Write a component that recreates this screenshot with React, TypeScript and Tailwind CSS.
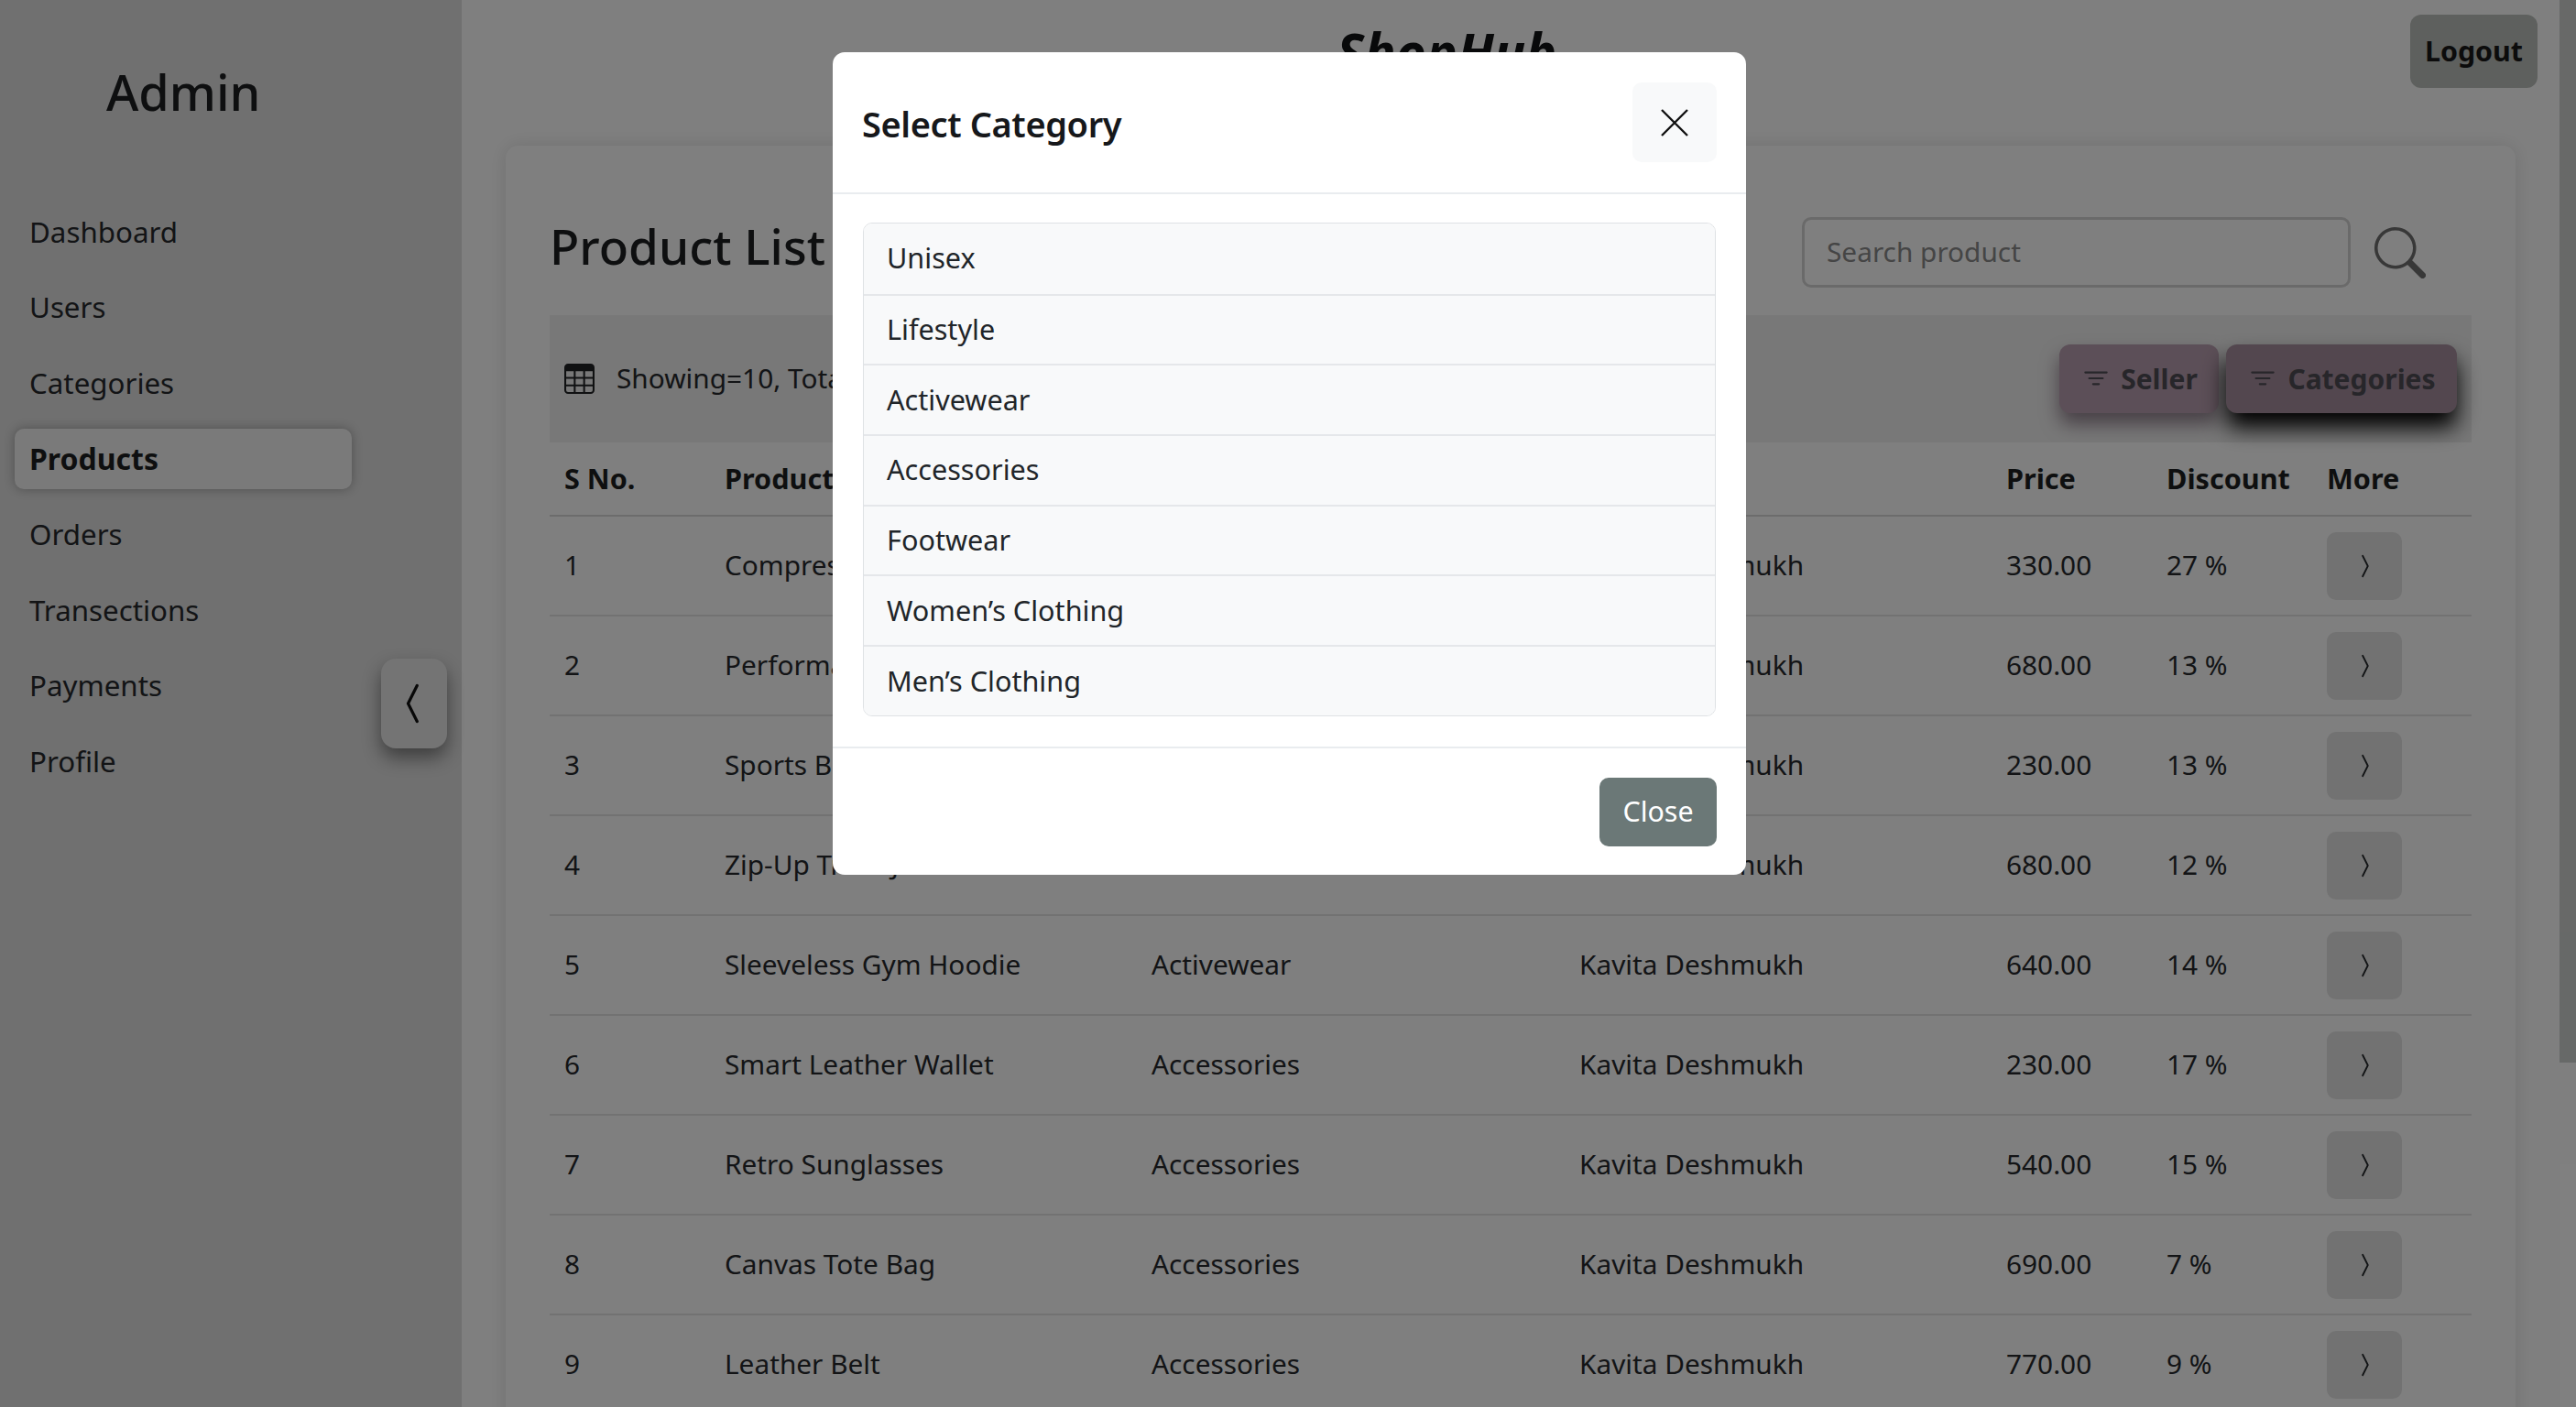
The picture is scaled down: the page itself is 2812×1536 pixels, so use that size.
import { BsChevronCompactLeft, BsChevronCompactRight, BsFilter, BsSearch, BsTable } from 'react-icons/bs'

const navItems = ['Dashboard', 'Users', 'Categories', 'Products', 'Orders', 'Transections', 'Payments', 'Profile']

const categories = ['Unisex', 'Lifestyle', 'Activewear', 'Accessories', 'Footwear', 'Women’s Clothing', 'Men’s Clothing']

const products = [
  { name: 'Compression T-Shirt', category: 'Activewear', price: '330.00', discount: '27 %' },
  { name: 'Performance Shorts', category: 'Activewear', price: '680.00', discount: '13 %' },
  { name: 'Sports Bra', category: 'Activewear', price: '230.00', discount: '13 %' },
  { name: 'Zip-Up Track Jacket', category: 'Activewear', price: '680.00', discount: '12 %' },
  { name: 'Sleeveless Gym Hoodie', category: 'Activewear', price: '640.00', discount: '14 %' },
  { name: 'Smart Leather Wallet', category: 'Accessories', price: '230.00', discount: '17 %' },
  { name: 'Retro Sunglasses', category: 'Accessories', price: '540.00', discount: '15 %' },
  { name: 'Canvas Tote Bag', category: 'Accessories', price: '690.00', discount: '7 %' },
  { name: 'Leather Belt', category: 'Accessories', price: '770.00', discount: '9 %' },
]

const columns = 'grid grid-cols-[175px_466px_467px_466px_175px_175px_1fr] items-center'

export default function App() {
  return (
    <div className="relative flex h-screen overflow-hidden bg-white font-['Noto_Sans',sans-serif] text-[29.8px] text-[#26292c]">
      {/* sidebar */}
      <aside className="relative w-[504px] shrink-0 bg-[#e0e0e0]">
        <h1 className="flex h-[200px] items-center pl-[116px] text-[54px] font-medium leading-none text-[#1c1e20]">Admin</h1>
        <nav className="flex flex-col px-4 pt-[12px] text-[31.3px]">
          {navItems.map((item) =>
            item === 'Products' ? (
              <a
                key={item}
                className="my-[8.3px] flex h-[66px] w-[368px] items-center rounded-[10px] bg-[#f4f4f4] px-4 text-[32px] font-bold text-[#1c1e20] shadow-[0_0_12px_rgba(0,0,0,0.3)]"
              >
                {item}
              </a>
            ) : (
              <a key={item} className="flex h-[82.6px] items-center px-4">
                {item}
              </a>
            ),
          )}
        </nav>
        <button className="absolute left-[416px] top-[719px] flex h-[98px] w-[72px] items-center justify-center rounded-[16px] bg-[#e8e8e8] text-[#111] shadow-[0_10px_20px_rgba(0,0,0,0.45)]">
          <BsChevronCompactLeft className="h-[52px] w-[52px]" />
        </button>
      </aside>

      {/* main */}
      <main className="min-w-0 flex-1">
        <header className="relative flex h-[112px] items-start justify-end pr-[24px] pt-[16px]">
          <div className="absolute left-[955px] top-[18px] text-[57px] font-bold italic leading-[76px] text-[#101214]">ShopHub</div>
          <button className="h-[80px] w-[139px] rounded-[12px] bg-[#bcc0bc] text-[30.4px] font-bold text-[#181818]">Logout</button>
        </header>

        <section className="mx-[48px] mt-[47px] h-[1400px] rounded-t-[14px] px-[48px] shadow-[0_0_20px_rgba(0,0,0,0.12)]">
          <div className="flex h-[185px] items-start justify-between">
            <h2 className="mt-[71px] text-[53px] font-medium leading-[78px] text-[#1c1e20]">Product List</h2>
            <div className="mt-[78px] mr-[50px] flex items-center gap-[26px]">
              <div className="flex h-[77px] w-[599px] items-center rounded-[10px] border-[3px] border-[#d4d4d4] bg-white px-[24px] text-[#8a8a8a]">Search product</div>
              <BsSearch className="h-[56px] w-[56px] text-[#707070]" />
            </div>
          </div>

          <div className="flex h-[139px] items-center justify-between bg-[#f0f0f0] pl-[16px] pr-[16px]">
            <div className="flex items-center gap-[24px]">
              <BsTable className="h-[33px] w-[33px] text-[#202225]" />
              <span>Showing=10, Total=50</span>
            </div>
            <div className="flex gap-[8px] text-[30px] font-bold text-[#4e4c54]">
              <button className="flex h-[75px] w-[174px] items-center justify-center gap-[10px] rounded-[12px] bg-[#b99fb0] shadow-[0_12px_20px_rgba(80,55,75,0.6)]">
                <BsFilter className="h-[34px] w-[34px]" />
                Seller
              </button>
              <button className="flex h-[75px] w-[252px] items-center justify-center gap-[10px] rounded-[12px] bg-[#a78f9e] shadow-[0_16px_24px_rgba(0,0,0,1)]">
                <BsFilter className="h-[34px] w-[34px]" />
                Categories
              </button>
            </div>
          </div>

          <div className={`${columns} h-[81px] border-b-2 border-[#d8d8d8] pl-[16px] text-[30.6px] font-bold text-[#1c1e20]`}>
            <span>S No.</span>
            <span>Product Name</span>
            <span>Category</span>
            <span>Seller</span>
            <span>Price</span>
            <span>Discount</span>
            <span>More</span>
          </div>
          {products.map((p, i) => (
            <div key={p.name} className={`${columns} h-[109px] border-b-2 border-[#e4e4e4] pl-[16px]`}>
              <span>{i + 1}</span>
              <span>{p.name}</span>
              <span>{p.category}</span>
              <span>Kavita Deshmukh</span>
              <span>{p.price}</span>
              <span>{p.discount}</span>
              <button className="flex h-[74px] w-[82px] items-center justify-center rounded-[10px] bg-[#e4e4e4]">
                <BsChevronCompactRight className="h-[30px] w-[30px]" />
              </button>
            </div>
          ))}
        </section>
      </main>

      {/* page scrollbar */}
      <div className="w-[18px] shrink-0 bg-white">
        <div className="h-[1160px] bg-[#cfd2d0]" />
      </div>

      {/* modal */}
      <div className="absolute inset-0 flex justify-center bg-black/50 pt-[57px]">
        <div className="ml-[3px] flex h-[898px] w-[997px] flex-col rounded-[13px] bg-white text-[#212529]">
          <div className="flex h-[155px] items-center justify-between border-b-2 border-[#e9ecef] pl-[32px] pr-[32px]">
            <h3 className="mt-[3px] text-[38px] font-semibold tracking-[-0.4px] text-[#16181b]">Select Category</h3>
            <button className="flex h-[87px] w-[92px] items-center justify-center rounded-[10px] bg-[#f8f9fa]">
              <svg viewBox="0 0 32 32" className="h-[32px] w-[32px]" fill="none" stroke="#111" strokeWidth="2.4">
                <path d="M2 2 L30 30 M30 2 L2 30" />
              </svg>
            </button>
          </div>
          <div className="flex-1 px-[33px] pt-[31px]">
            <ul className="overflow-hidden rounded-[10px] border border-[#dfe2e5] text-[30.6px]">
              {categories.map((c, i) => (
                <li key={c} className={`flex h-[76.7px] items-center bg-[#f8f9fa] px-[25px] ${i > 0 ? 'border-t-2 border-[#e5e7ea]' : ''}`}>
                  {c}
                </li>
              ))}
            </ul>
          </div>
          <div className="flex h-[140px] items-center justify-end border-t-2 border-[#e9ecef] px-[32px]">
            <button className="h-[75px] w-[128px] rounded-[10px] bg-[#6b7877] text-[30.4px] text-white">Close</button>
          </div>
        </div>
      </div>
    </div>
  )
}
